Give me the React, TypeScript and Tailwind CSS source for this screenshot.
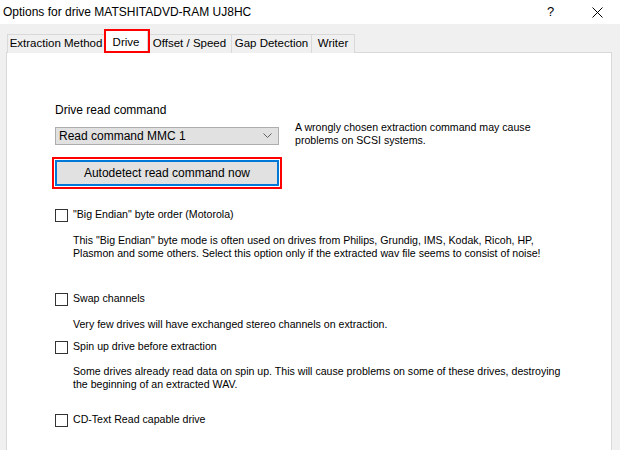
import React from "react";

const Checkbox = () => (
  <div className="w-[13px] h-[13px] border border-[#333333] bg-white shrink-0" />
);

export default function App() {
  return (
    <div
      className="w-[620px] h-[450px] bg-[#f0f0f0] overflow-hidden text-black"
      style={{ fontFamily: '"Liberation Sans", Arial, sans-serif' }}
    >
      {/* Title bar */}
      <div className="h-[24px] bg-white flex items-center relative">
        <span className="pl-[3px] text-[12px] leading-none whitespace-nowrap">Options for drive MATSHITADVD-RAM UJ8HC</span>
        <span className="absolute left-[547px] top-[5px] text-[13px] leading-none">?</span>
        <svg className="absolute left-[592px] top-[7px]" width="11" height="11" viewBox="0 0 11 11">
          <path d="M0.5 0.5 L10.5 10.5 M10.5 0.5 L0.5 10.5" stroke="#000" strokeWidth="1" />
        </svg>
      </div>

      {/* Tabs */}
      <div className="flex items-end h-[28px] pl-[7px] relative z-10 whitespace-nowrap text-[11.5px]">
        <div className="w-[97px] h-[19px] border-t border-l border-[#d9d9d9] bg-[#f0f0f0] flex items-center justify-center mb-[-1px]">
          Extraction Method
        </div>
        <div className="relative w-[44px] h-[22px] border-t border-l border-r border-[#d9d9d9] bg-white flex items-start justify-center pt-[3px]">
          Drive
          <div className="absolute left-[-1px] top-[-2px] w-[46px] h-[24px] border-2 border-[#ff0000]" />
        </div>
        <div className="w-[83px] h-[19px] border-t border-[#d9d9d9] bg-[#f0f0f0] flex items-center justify-center mb-[-1px]">
          Offset / Speed
        </div>
        <div className="w-[80px] h-[19px] border-t border-l border-[#d9d9d9] bg-[#f0f0f0] flex items-center justify-center mb-[-1px]">
          Gap Detection
        </div>
        <div className="w-[44px] h-[19px] border-t border-l border-r border-[#d9d9d9] bg-[#f0f0f0] flex items-center justify-center mb-[-1px]">
          Writer
        </div>
      </div>

      {/* Panel */}
      <div className="ml-[6px] w-[606px] h-[420px] border border-[#d9d9d9] bg-white pl-[48px] flex flex-col">
        <div className="mt-[49px] h-[16px] leading-[16px] text-[12px]">Drive read command</div>

        <div className="mt-[3px] flex items-start">
          <div className="mt-[6px] w-[224px] h-[18px] bg-[#e1e1e1] border border-[#adadad] flex items-center justify-between pl-[3px] pr-[6px] text-[12px]">
            <span>Read command MMC 1</span>
            <svg width="9" height="6" viewBox="0 0 9 6">
              <path d="M0.5 0.5 L4.5 4.5 L8.5 0.5" fill="none" stroke="#606060" strokeWidth="1" />
            </svg>
          </div>
          <div className="ml-[16px] text-[10.6px] leading-[13px]">
            A wrongly chosen extraction command may cause
            <br />
            problems on SCSI systems.
          </div>
        </div>

        <div className="mt-[10px] ml-[-3px] w-[230px] h-[32px] border-2 border-[#ff0000] p-px">
          <div className="w-full h-full bg-[#e1e1e1] border-2 border-[#0078d7] flex items-center justify-center text-[12px]">
            Autodetect read command now
          </div>
        </div>

        <div className="mt-[18px] h-[16px] flex items-center gap-[5px] text-[10.6px]">
          <Checkbox />
          <span>"Big Endian" byte order (Motorola)</span>
        </div>
        <div className="mt-[11px] ml-[18px] text-[10.6px] leading-[13px]">
          This "Big Endian" byte mode is often used on drives from Philips, Grundig, IMS, Kodak, Ricoh, HP,
          <br />
          Plasmon and some others. Select this option only if the extracted wav file seems to consist of noise!
        </div>

        <div className="mt-[31px] h-[16px] flex items-center gap-[5px] text-[10.6px]">
          <Checkbox />
          <span>Swap channels</span>
        </div>
        <div className="mt-[11px] ml-[18px] text-[10.6px] leading-[13px]">
          Very few drives will have exchanged stereo channels on extraction.
        </div>

        <div className="mt-[8px] h-[16px] flex items-center gap-[5px] text-[10.6px]">
          <Checkbox />
          <span>Spin up drive before extraction</span>
        </div>
        <div className="mt-[10px] ml-[18px] text-[10.6px] leading-[13px]">
          Some drives already read data on spin up. This will cause problems on some of these drives, destroying
          <br />
          the beginning of an extracted WAV.
        </div>

        <div className="mt-[21px] h-[16px] flex items-center gap-[5px] text-[10.6px]">
          <Checkbox />
          <span>CD-Text Read capable drive</span>
        </div>
      </div>
    </div>
  );
}
